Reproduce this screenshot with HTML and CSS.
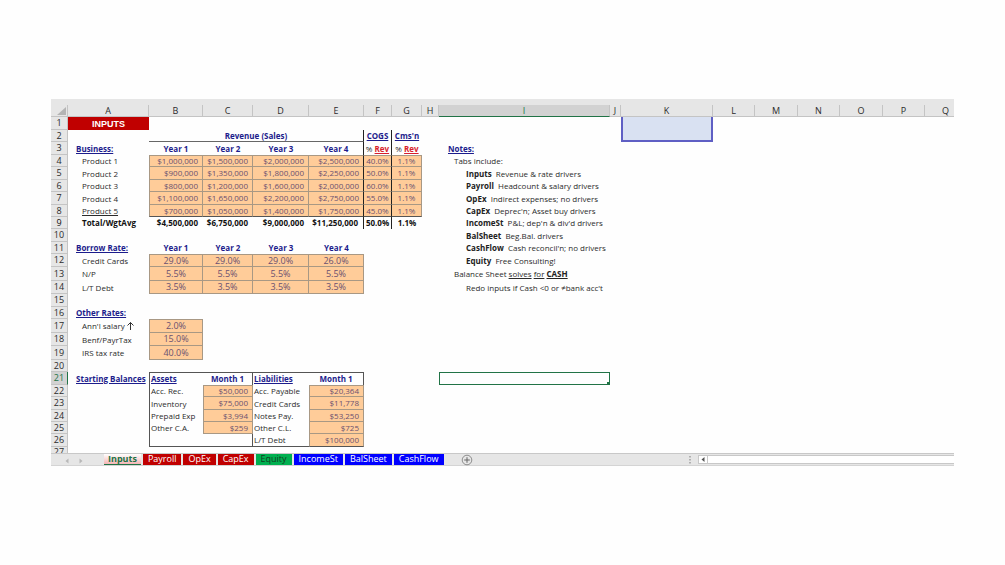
FILE: index.html
```html
<!DOCTYPE html>
<html lang="en">
<head>
    <meta charset="UTF-8">
    <meta name="viewport" content="width=device-width, initial-scale=1.0">
    <title>Inputs</title>
    <link rel="stylesheet" href="styles.css">
</head>
<body>
<main class="workbook">
    <table class="sheet">
        <colgroup>
            <col class="col-num"><col class="col-a"><col class="col-b"><col class="col-c"><col class="col-d"><col class="col-e">
            <col class="col-f"><col class="col-g"><col class="col-h"><col class="col-i"><col class="col-j"><col class="col-k">
            <col class="col-l"><col class="col-m"><col class="col-l"><col class="col-m"><col class="col-l"><col>
        </colgroup>
        <thead>
            <tr class="short">
                <th class="corner"><svg width="9" height="8" viewBox="0 0 9 8"><path d="M9 0V8H0Z" fill="#b4b4b4"/></svg></th>
                <th>A</th><th>B</th><th>C</th><th>D</th><th>E</th><th>F</th><th>G</th><th>H</th>
                <th class="current">I</th><th>J</th><th>K</th><th>L</th><th>M</th><th>N</th><th>O</th><th>P</th><th class="last">Q</th>
            </tr>
        </thead>
        <tbody>
            <tr><th>1</th><td class="banner">INPUTS</td><td colspan="9"></td><td class="blue" rowspan="2"></td><td colspan="6"></td></tr>
            <tr class="short"><th>2</th><td></td><td class="head center under edge" colspan="4">Revenue (Sales)</td><td class="head center edge"><u>COGS</u></td><td class="head center"><u>Cms'n</u></td><td colspan="3"></td><td colspan="6"></td></tr>
            <tr><th>3</th><td class="head title"><u>Business:</u></td><td class="head center">Year 1</td><td class="head center">Year 2</td><td class="head center">Year 3</td><td class="head center edge">Year 4</td><td class="center edge">% <u class="rev">Rev</u></td><td class="center">% <u class="rev">Rev</u></td><td></td><td class="note head"><u>Notes:</u></td><td colspan="8"></td></tr>
            <tr class="short"><th>4</th><td class="label">Product 1</td><td class="in first top">$1,000,000</td><td class="in top">$1,500,000</td><td class="in top">$2,000,000</td><td class="in top edge">$2,500,000</td><td class="in pct top edge">40.0%</td><td class="in pct top">1.1%</td><td></td><td class="note one">Tabs include:</td><td colspan="8"></td></tr>
            <tr><th>5</th><td class="label">Product 2</td><td class="in first">$900,000</td><td class="in">$1,350,000</td><td class="in">$1,800,000</td><td class="in edge">$2,250,000</td><td class="in pct edge">50.0%</td><td class="in pct">1.1%</td><td></td><td class="note two"><b>Inputs</b>&nbsp; Revenue &amp; rate drivers</td><td colspan="8"></td></tr>
            <tr class="short"><th>6</th><td class="label">Product 3</td><td class="in first">$800,000</td><td class="in">$1,200,000</td><td class="in">$1,600,000</td><td class="in edge">$2,000,000</td><td class="in pct edge">60.0%</td><td class="in pct">1.1%</td><td></td><td class="note two"><b>Payroll</b>&nbsp; Headcount &amp; salary drivers</td><td colspan="8"></td></tr>
            <tr><th>7</th><td class="label">Product 4</td><td class="in first">$1,100,000</td><td class="in">$1,650,000</td><td class="in">$2,200,000</td><td class="in edge">$2,750,000</td><td class="in pct edge">55.0%</td><td class="in pct">1.1%</td><td></td><td class="note two"><b>OpEx</b>&nbsp; Indirect expenses; no drivers</td><td colspan="8"></td></tr>
            <tr class="short sum"><th>8</th><td class="label"><u>Product 5</u></td><td class="in first">$700,000</td><td class="in">$1,050,000</td><td class="in">$1,400,000</td><td class="in edge">$1,750,000</td><td class="in pct edge">45.0%</td><td class="in pct">1.1%</td><td></td><td class="note two"><b>CapEx</b>&nbsp; Deprec'n; Asset buy drivers</td><td colspan="8"></td></tr>
            <tr class="short total"><th>9</th><td class="label">Total/WgtAvg</td><td class="right">$4,500,000</td><td class="right">$6,750,000</td><td class="right">$9,000,000</td><td class="right edge">$11,250,000</td><td class="center edge">50.0%</td><td class="center">1.1%</td><td></td><td class="note two"><b>IncomeSt</b>&nbsp; P&amp;L; dep'n &amp; div'd drivers</td><td colspan="8"></td></tr>
            <tr><th>10</th><td colspan="8"></td><td class="note two"><b>BalSheet</b>&nbsp; Beg.Bal. drivers</td><td colspan="8"></td></tr>
            <tr class="short"><th>11</th><td class="head title"><u>Borrow Rate:</u></td><td class="head center">Year 1</td><td class="head center">Year 2</td><td class="head center">Year 3</td><td class="head center">Year 4</td><td colspan="3"></td><td class="note two"><b>CashFlow</b>&nbsp; Cash reconcil'n; no drivers</td><td colspan="8"></td></tr>
            <tr><th>12</th><td class="label">Credit Cards</td><td class="in rate first top">29.0%</td><td class="in rate top">29.0%</td><td class="in rate top">29.0%</td><td class="in rate top">26.0%</td><td colspan="3"></td><td class="note two"><b>Equity</b>&nbsp; Free Consulting!</td><td colspan="8"></td></tr>
            <tr class="tall"><th>13</th><td class="label">N/P</td><td class="in rate first">5.5%</td><td class="in rate">5.5%</td><td class="in rate">5.5%</td><td class="in rate">5.5%</td><td colspan="3"></td><td class="note one">Balance Sheet <u>solves</u> <u>for</u> <b><u>CASH</u></b></td><td colspan="8"></td></tr>
            <tr><th>14</th><td class="label">L/T Debt</td><td class="in rate first">3.5%</td><td class="in rate">3.5%</td><td class="in rate">3.5%</td><td class="in rate">3.5%</td><td colspan="3"></td><td class="note two">Redo inputs if Cash &lt;0 or ≠bank acc't</td><td colspan="8"></td></tr>
            <tr><th>15</th><td colspan="17"></td></tr>
            <tr class="short"><th>16</th><td class="head title"><u>Other Rates:</u></td><td colspan="16"></td></tr>
            <tr class="tall"><th>17</th><td class="label">Ann'l salary <svg class="up" width="7" height="9" viewBox="0 0 7 9"><path d="M3.5 9V1.5M.5 4.5L3.5 1.5L6.5 4.5" fill="none" stroke="#333"/></svg></td><td class="in rate first top">2.0%</td><td colspan="15"></td></tr>
            <tr><th>18</th><td class="label">Benf/PayrTax</td><td class="in rate first">15.0%</td><td colspan="15"></td></tr>
            <tr class="tall"><th>19</th><td class="label">IRS tax rate</td><td class="in rate first">40.0%</td><td colspan="15"></td></tr>
            <tr class="short"><th>20</th><td colspan="17"></td></tr>
            <tr class="box-top"><th class="current">21</th><td class="head title"><u>Starting Balances</u></td><td class="head item box-left"><u>Assets</u></td><td class="head center box-right">Month 1</td><td class="head item"><u>Liabilities</u></td><td class="head center box-right">Month 1</td><td colspan="3"></td><td class="selected"></td><td colspan="8"></td></tr>
            <tr class="short"><th>22</th><td></td><td class="item box-left">Acc. Rec.</td><td class="in first top">$50,000</td><td class="item">Acc. Payable</td><td class="in first top">$20,364</td><td colspan="12"></td></tr>
            <tr><th>23</th><td></td><td class="item box-left">Inventory</td><td class="in first">$75,000</td><td class="item">Credit Cards</td><td class="in first">$11,778</td><td colspan="12"></td></tr>
            <tr class="short"><th>24</th><td></td><td class="item box-left">Prepaid Exp</td><td class="in first">$3,994</td><td class="item">Notes Pay.</td><td class="in first">$53,250</td><td colspan="12"></td></tr>
            <tr class="short"><th>25</th><td></td><td class="item box-left">Other C.A.</td><td class="in first">$259</td><td class="item">Other C.L.</td><td class="in first">$725</td><td colspan="12"></td></tr>
            <tr class="box-bottom"><th>26</th><td></td><td class="box-left"></td><td class="box-right"></td><td class="item">L/T Debt</td><td class="in first">$100,000</td><td colspan="12"></td></tr>
            <tr class="cut"><th><div>27</div></th><td colspan="17"></td></tr>
        </tbody>
    </table>

    <footer class="bar">
        <div class="arrows">
            <button aria-label="Previous sheet"><svg width="4" height="6" viewBox="0 0 4 6"><path d="M3.5 .5V5.5L.5 3Z" fill="#b8b8b8"/></svg></button>
            <button aria-label="Next sheet"><svg width="4" height="6" viewBox="0 0 4 6"><path d="M.5 .5V5.5L3.5 3Z" fill="#b8b8b8"/></svg></button>
        </div>
        <nav class="tabs">
            <button class="tab active">Inputs</button>
            <button class="tab red">Payroll</button>
            <button class="tab red">OpEx</button>
            <button class="tab red">CapEx</button>
            <button class="tab green">Equity</button>
            <button class="tab navy">IncomeSt</button>
            <button class="tab navy">BalSheet</button>
            <button class="tab navy">CashFlow</button>
        </nav>
        <button class="add" aria-label="New sheet"><svg width="12" height="12" viewBox="0 0 12 12"><circle cx="6" cy="6" r="4.8" fill="none" stroke="#777" stroke-width=".8"/><path d="M6 3.2V8.8M3.2 6H8.8" stroke="#666"/></svg></button>
        <div class="scroll">
            <svg class="grip" width="2" height="8" viewBox="0 0 2 8"><path d="M1 0V8" stroke="#999" stroke-width="1.4" stroke-dasharray="1.4 1.6"/></svg>
            <button class="left" aria-label="Scroll left"><svg width="4" height="5" viewBox="0 0 4 5"><path d="M3.5 0V5L.5 2.5Z" fill="#555"/></svg></button>
            <div class="track"></div>
        </div>
    </footer>
</main>
</body>
</html>
```
FILE: styles.css
```css
*{
    box-sizing: border-box;
}
body{
    margin: 0;
    padding: 99px 51px;
    background-color: #fefefe;
    font-family: "Open Sans", "Noto Sans", sans-serif;
    font-size: 8px;
    line-height: 10px;
    color: #2b2b2b;
}
button{
    padding: 0;
    border: none;
    background: none;
    font: inherit;
    color: inherit;
}
svg{
    display: block;
}
.workbook{
    overflow: hidden;
}

/* grid */
.sheet{
    width: 100%;
    table-layout: fixed;
    border-collapse: separate;
    border-spacing: 0;
    border-top: 6px solid #e6e6e6;
}
.col-num{ width: 17px; }
.col-a{ width: 81px; }
.col-b{ width: 54px; }
.col-c{ width: 50px; }
.col-d{ width: 56px; }
.col-e{ width: 55px; }
.col-f{ width: 28px; }
.col-g{ width: 30px; }
.col-h{ width: 17px; }
.col-i{ width: 171px; }
.col-j{ width: 11px; }
.col-k{ width: 92px; }
.col-l{ width: 42px; }
.col-m{ width: 43px; }

.sheet tr{
    height: 13px;
}
.sheet .short{
    height: 12px;
}
.sheet .tall{
    height: 14px;
}
.sheet td, .sheet th{
    padding: 0;
    white-space: nowrap;
    vertical-align: middle;
}
.sheet th{
    background-color: #e6e6e6;
    border-right: 1px solid #c4c4c4;
    border-bottom: 1px solid #c4c4c4;
    font-size: 9px;
    font-weight: normal;
    text-align: center;
}
.sheet .corner{
    padding-left: 6px;
}
.sheet .last{
    padding-left: 12px;
    border-right: none;
}
.sheet th.current{
    background-color: #d2d2d2;
    color: #217346;
}
thead .current{
    border-bottom: 1px solid #217346;
}
tbody .current{
    border-right: 1px solid #217346;
}

/* text cells */
.head{
    font-weight: bold;
    color: #1c1c8c;
}
.center{
    text-align: center;
}
.right{
    text-align: right;
}
.sheet .right{
    padding-right: 5px;
}
.sheet .title{
    padding-left: 8px;
}
.sheet .label{
    padding-left: 14px;
}
.sheet .item{
    padding-left: 1px;
}
.banner{
    background-color: #c00000;
    color: #fff;
    font-family: "Liberation Sans", Arial, sans-serif;
    font-size: 9px;
    font-weight: bold;
    text-align: center;
}
.rev{
    color: #d81e2c;
    font-weight: bold;
}
.total{
    font-weight: bold;
    color: #111;
}
.total .note{
    font-weight: normal;
    color: #2b2b2b;
}
.up{
    display: inline-block;
    vertical-align: top;
}
.sheet .note{
    padding-left: 9px;
}
.sheet .one{
    padding-left: 15px;
}
.sheet .two{
    padding-left: 27px;
}
.note b{
    color: #222;
}

/* input cells */
.sheet .in{
    padding-right: 4px;
    background-color: #ffcc99;
    border-right: 1px solid #a89884;
    border-bottom: 1px solid #a89884;
    color: #6a5070;
    text-align: right;
}
.sheet .first{
    border-left: 1px solid #a89884;
}
.sheet .top{
    border-top: 1px solid #a89884;
}
.sheet .pct{
    padding-right: 0;
    text-align: center;
}
.sheet .rate{
    padding-right: 0;
    font-size: 9px;
    text-align: center;
}
.sheet .under{
    border-bottom: 1px solid #666;
}
.sheet .edge{
    border-right: 1px solid #222;
}
.sheet .sum .in{
    border-bottom-color: #555;
}
.blue{
    background-color: #d9e1f2;
    border: 2px solid #5f5fc4;
    border-top: none;
}

/* starting balances box */
.box-top .item, .box-top .box-right{
    border-top: 1px solid #555;
}
.box-bottom .box-left, .box-bottom .box-right, .box-bottom .item, .sheet .box-bottom .in{
    border-bottom: 1px solid #555;
}
.box-left{
    border-left: 1px solid #555;
}
.box-right{
    border-right: 1px solid #555;
}
.selected{
    position: relative;
    border: 1px solid #217346;
}
.selected::after{
    content: "";
    position: absolute;
    right: -1px;
    bottom: -1px;
    width: 3px;
    height: 3px;
    background-color: #217346;
}
.sheet .cut{
    height: 6px;
}
.cut th{
    border-bottom: none;
}
.cut div{
    height: 6px;
    overflow: hidden;
}

/* sheet tabs */
.bar{
    display: flex;
    height: 13px;
    background-color: #e6e6e6;
    border-top: 1px solid #c8c8c8;
    border-bottom: 1px solid #d4d4d4;
}
.arrows{
    display: flex;
    align-items: center;
    gap: 10px;
    width: 53px;
    padding: 2px 0 0 14px;
}
.tabs{
    display: flex;
    gap: 2px;
    font-size: 9px;
}
.tab{
    padding: 0 5px 2px;
    color: #fff;
}
.active{
    padding: 0 4px 1px;
    background-image: linear-gradient(#fff, #f5b5b5);
    border-bottom: 1px solid #217346;
    color: #217346;
    font-weight: bold;
}
.red{
    background-color: #c00000;
}
.green{
    background-color: #00b050;
    color: #143c22;
}
.navy{
    background-color: #0000ff;
}
.add{
    margin-left: 17px;
}
.scroll{
    display: flex;
    align-items: center;
    width: 265px;
    margin-left: auto;
}
.left{
    display: flex;
    align-items: center;
    justify-content: center;
    width: 10px;
    height: 9px;
    margin-left: 7px;
    background-color: #fff;
    border: 1px solid #c8c8c8;
}
.track{
    flex: 1;
    height: 9px;
    background-color: #fff;
    border-top: 1px solid #c8c8c8;
    border-bottom: 1px solid #c8c8c8;
}
```
